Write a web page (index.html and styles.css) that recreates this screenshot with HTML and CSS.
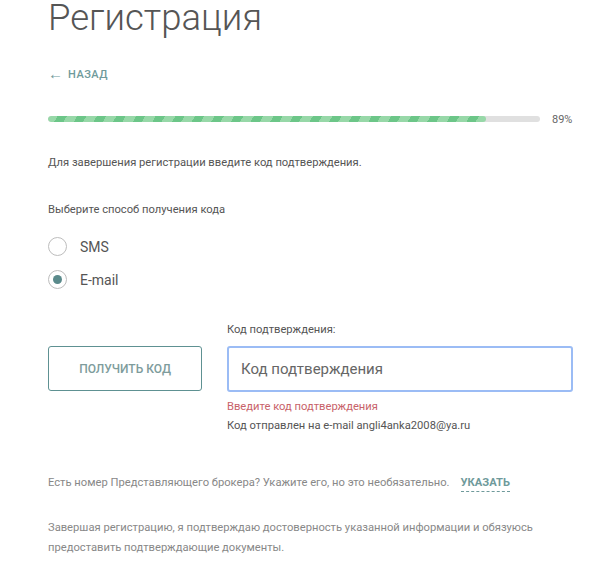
FILE: index.html
```html
<!DOCTYPE html>
<html lang="ru">
<head>
<meta charset="utf-8">
<link rel="stylesheet" href="styles.css">
</head>
<body>
<div class="page">
  <h1 class="title">Регистрация</h1>
  <a class="back" href="#"><span class="arrow">←</span>НАЗАД</a>
  <div class="progress-row">
    <div class="progress"><div class="progress-fill" style="width: 89%"></div></div>
    <span class="progress-val">89%</span>
  </div>
  <p class="info">Для завершения регистрации введите код подтверждения.</p>
  <p class="choose">Выберите способ получения кода</p>
  <div class="radios">
    <label class="radio"><span class="dot"></span>SMS</label>
    <label class="radio checked"><span class="dot"></span>E-mail</label>
  </div>
  <div class="code-row">
    <button class="get-code">ПОЛУЧИТЬ КОД</button>
    <div class="field">
      <div class="field-label">Код подтверждения:</div>
      <div class="input">Код подтверждения</div>
      <div class="error">Введите код подтверждения</div>
      <div class="sent">Код отправлен на e-mail angli4anka2008@ya.ru</div>
    </div>
  </div>
  <p class="broker">Есть номер Представляющего брокера? Укажите его, но это необязательно.<a class="specify" href="#">УКАЗАТЬ</a></p>
  <p class="agree">Завершая регистрацию, я подтверждаю достоверность указанной информации и обязуюсь предоставить подтверждающие документы.</p>
</div>
</body>
</html>
```
FILE: styles.css
```css
html, body { margin: 0; padding: 0; background: #fff; }
body { font-family: Roboto, "Noto Sans", sans-serif; color: #555; }
.page { padding: 0 29px 0 48px; }
.title {
  margin: 0; font-size: 36.5px; font-weight: 300; color: #555;
  line-height: 36px;
}
.back {
  display: flex; align-items: center; margin-top: 32px; height: 12px;
  font-size: 11px; font-weight: 500; color: #6f9a9b; letter-spacing: 0.5px;
  text-decoration: none;
}
.arrow { font-size: 15px; margin-right: 5px; letter-spacing: 0; color: #6f9a9b; }
.progress-row { display: flex; align-items: center; margin-top: 33px; height: 12px; }
.progress { width: 492px; height: 6px; background: #e0e0e0; border-radius: 3px; overflow: hidden; }
.progress-fill {
  height: 100%; border-radius: 3px;
  background: repeating-linear-gradient(-60deg, #97d8a8 0 9px, #6cc688 9px 17px);
}
.progress-val { margin-left: 12px; font-size: 11px; color: #666; }
.info { margin: 31px 0 0; font-size: 11.2px; line-height: 14px; color: #555; }
.choose { margin: 33px 0 0; font-size: 11.2px; line-height: 14px; color: #555; }
.radios { display: flex; flex-direction: column; gap: 14px; margin-top: 20px; }
.radio { display: flex; align-items: center; height: 19px; font-size: 14px; color: #555; }
.dot {
  width: 17px; height: 17px; border: 1px solid #bdbdbd; border-radius: 50%;
  margin-right: 13px; display: flex; align-items: center; justify-content: center;
}
.checked .dot::after { content: ""; width: 9px; height: 9px; border-radius: 50%; background: #5a8a8b; }
.code-row { display: flex; align-items: flex-start; gap: 25px; margin-top: 34px; }
.get-code {
  margin-top: 23px; width: 154px; height: 45px; border: 1px solid #5e9192; border-radius: 3px;
  background: #fff; color: #7e9c9c; font-family: inherit; font-size: 12px; font-weight: 500;
  letter-spacing: 0;
}
.field { flex: 1; }
.field-label { font-size: 11.2px; line-height: 14px; color: #555; }
.input {
  margin-top: 9px; height: 42px; border: 2px solid #9bbcf5; border-radius: 3px;
  display: flex; align-items: center; padding-left: 12px; font-size: 15px; color: #666;
}
.error { margin-top: 8px; font-size: 11.2px; line-height: 14px; color: #c8626a; }
.sent { margin-top: 5px; font-size: 11.2px; line-height: 14px; color: #555; }
.broker { margin: 43px 0 0; font-size: 11.2px; line-height: 14px; color: #888; }
.specify {
  margin-left: 11px; font-weight: 700; color: #6f9a9b; text-decoration: none;
  border-bottom: 1px dashed #6f9a9b; padding-bottom: 2px;
}
.agree { margin: 28px 0 0; font-size: 11.2px; line-height: 20px; color: #888; }
```
